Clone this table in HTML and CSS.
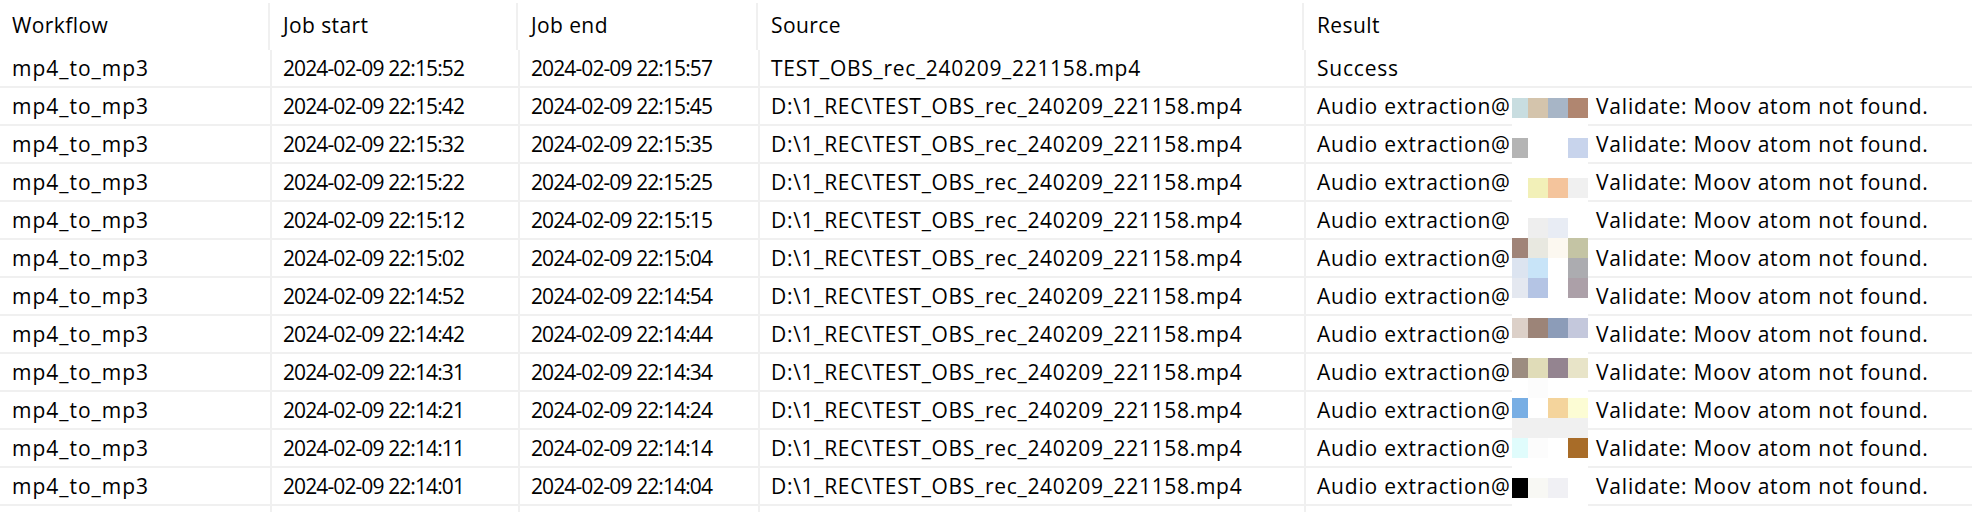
FILE: index.html
```html
<!DOCTYPE html>
<html>
<head>
<meta charset="utf-8">
<link rel="stylesheet" href="styles.css">
</head>
<body>
<div class="table">
  <div class="head">
    <div class="hcell">Workflow</div>
    <div class="hcell">Job start</div>
    <div class="hcell">Job end</div>
    <div class="hcell">Source</div>
    <div class="hcell last">Result</div>
  </div>
  <div class="row"><div class="cell wf">mp4_to_mp3</div><div class="cell date">2024-02-09 22:15:52</div><div class="cell date">2024-02-09 22:15:57</div><div class="cell src">TEST_OBS_rec_240209_221158.mp4</div><div class="cell">Success</div></div>
  <div class="row"><div class="cell wf">mp4_to_mp3</div><div class="cell date">2024-02-09 22:15:42</div><div class="cell date">2024-02-09 22:15:45</div><div class="cell src">D:\1_REC\TEST_OBS_rec_240209_221158.mp4</div><div class="cell"><span class="prefix">Audio extraction@</span>Validate: Moov atom not found.</div></div>
  <div class="row"><div class="cell wf">mp4_to_mp3</div><div class="cell date">2024-02-09 22:15:32</div><div class="cell date">2024-02-09 22:15:35</div><div class="cell src">D:\1_REC\TEST_OBS_rec_240209_221158.mp4</div><div class="cell"><span class="prefix">Audio extraction@</span>Validate: Moov atom not found.</div></div>
  <div class="row"><div class="cell wf">mp4_to_mp3</div><div class="cell date">2024-02-09 22:15:22</div><div class="cell date">2024-02-09 22:15:25</div><div class="cell src">D:\1_REC\TEST_OBS_rec_240209_221158.mp4</div><div class="cell"><span class="prefix">Audio extraction@</span>Validate: Moov atom not found.</div></div>
  <div class="row"><div class="cell wf">mp4_to_mp3</div><div class="cell date">2024-02-09 22:15:12</div><div class="cell date">2024-02-09 22:15:15</div><div class="cell src">D:\1_REC\TEST_OBS_rec_240209_221158.mp4</div><div class="cell"><span class="prefix">Audio extraction@</span>Validate: Moov atom not found.</div></div>
  <div class="row"><div class="cell wf">mp4_to_mp3</div><div class="cell date">2024-02-09 22:15:02</div><div class="cell date">2024-02-09 22:15:04</div><div class="cell src">D:\1_REC\TEST_OBS_rec_240209_221158.mp4</div><div class="cell"><span class="prefix">Audio extraction@</span>Validate: Moov atom not found.</div></div>
  <div class="row"><div class="cell wf">mp4_to_mp3</div><div class="cell date">2024-02-09 22:14:52</div><div class="cell date">2024-02-09 22:14:54</div><div class="cell src">D:\1_REC\TEST_OBS_rec_240209_221158.mp4</div><div class="cell"><span class="prefix">Audio extraction@</span>Validate: Moov atom not found.</div></div>
  <div class="row"><div class="cell wf">mp4_to_mp3</div><div class="cell date">2024-02-09 22:14:42</div><div class="cell date">2024-02-09 22:14:44</div><div class="cell src">D:\1_REC\TEST_OBS_rec_240209_221158.mp4</div><div class="cell"><span class="prefix">Audio extraction@</span>Validate: Moov atom not found.</div></div>
  <div class="row"><div class="cell wf">mp4_to_mp3</div><div class="cell date">2024-02-09 22:14:31</div><div class="cell date">2024-02-09 22:14:34</div><div class="cell src">D:\1_REC\TEST_OBS_rec_240209_221158.mp4</div><div class="cell"><span class="prefix">Audio extraction@</span>Validate: Moov atom not found.</div></div>
  <div class="row"><div class="cell wf">mp4_to_mp3</div><div class="cell date">2024-02-09 22:14:21</div><div class="cell date">2024-02-09 22:14:24</div><div class="cell src">D:\1_REC\TEST_OBS_rec_240209_221158.mp4</div><div class="cell"><span class="prefix">Audio extraction@</span>Validate: Moov atom not found.</div></div>
  <div class="row"><div class="cell wf">mp4_to_mp3</div><div class="cell date">2024-02-09 22:14:11</div><div class="cell date">2024-02-09 22:14:14</div><div class="cell src">D:\1_REC\TEST_OBS_rec_240209_221158.mp4</div><div class="cell"><span class="prefix">Audio extraction@</span>Validate: Moov atom not found.</div></div>
  <div class="row"><div class="cell wf">mp4_to_mp3</div><div class="cell date">2024-02-09 22:14:01</div><div class="cell date">2024-02-09 22:14:04</div><div class="cell src">D:\1_REC\TEST_OBS_rec_240209_221158.mp4</div><div class="cell"><span class="prefix">Audio extraction@</span>Validate: Moov atom not found.</div></div>
  <div class="row stub"><div class="cell"></div><div class="cell"></div><div class="cell"></div><div class="cell"></div><div class="cell"></div></div>

  <div class="mosaic">
    <i style="background:#c8dde0"></i><i style="background:#d4c4ac"></i><i style="background:#a7b5c6"></i><i style="background:#b08670"></i>
    <i></i><i></i><i></i><i></i>
    <i style="background:#b4b4b4"></i><i></i><i></i><i style="background:#c8d4ec"></i>
    <i></i><i></i><i></i><i></i>
    <i></i><i style="background:#f2f0b8"></i><i style="background:#f4c49c"></i><i style="background:#f0f0f0"></i>
    <i></i><i></i><i></i><i></i>
    <i></i><i style="background:#eeeeee"></i><i style="background:#e8ecf4"></i><i></i>
    <i style="background:#a08478"></i><i style="background:#e8e8e0"></i><i style="background:#fcf8f0"></i><i style="background:#c4c4a4"></i>
    <i style="background:#dce4f0"></i><i style="background:#c8e4f8"></i><i></i><i style="background:#acacb0"></i>
    <i style="background:#e4e8f0"></i><i style="background:#b4c4e4"></i><i></i><i style="background:#aca0a8"></i>
    <i></i><i></i><i></i><i></i>
    <i style="background:#dcd0c8"></i><i style="background:#9c8478"></i><i style="background:#8c9cb8"></i><i style="background:#c4c8dc"></i>
    <i></i><i></i><i></i><i></i>
    <i style="background:#9c8c80"></i><i style="background:#e0dcb8"></i><i style="background:#948490"></i><i style="background:#e8e4c8"></i>
    <i></i><i style="background:#fcfcfc"></i><i></i><i></i>
    <i style="background:#78aee4"></i><i></i><i style="background:#f4d49c"></i><i style="background:#fcfcd4"></i>
    <i style="background:#f0f0f0"></i><i style="background:#f0f0f0"></i><i style="background:#f0f0f0"></i><i style="background:#f0f0f0"></i>
    <i style="background:#e0fcfc"></i><i style="background:#fcfcfc"></i><i></i><i style="background:#a86c28"></i>
    <i></i><i></i><i></i><i></i>
    <i style="background:#000000"></i><i style="background:#f8f8f4"></i><i style="background:#f0f0f4"></i><i></i>
    <i></i><i></i><i></i><i></i>
  </div>
</div>
</body>
</html>
```
FILE: styles.css
```css
html, body {
  margin: 0;
  padding: 0;
  background: #ffffff;
  overflow: hidden;
}
body {
  width: 1972px;
  height: 512px;
  font-family: "Open Sans", "Noto Sans", sans-serif;
  font-size: 21px;
  letter-spacing: 0.8px;
  color: #000000;
}
.table {
  position: relative;
  --cols: 270px 248px 240px 546px 1fr;
}
.head {
  display: grid;
  grid-template-columns: var(--cols);
  height: 50px;
}
.hcell {
  padding-left: 13px;
  border-right: 2px solid #f0f0f0;
  margin-top: 3px;
  line-height: 44px;
  letter-spacing: 0.4px;
  white-space: nowrap;
}
.hcell:first-child {
  padding-left: 12px;
}
.hcell.last {
  border-right: none;
}
.row {
  display: grid;
  grid-template-columns: var(--cols);
  height: 36px;
  border-bottom: 2px solid #f0f0f0;
}
.cell {
  padding-left: 11px;
  line-height: 36px;
  border-left: 2px solid #f0f0f0;
  white-space: nowrap;
  overflow: hidden;
}
.cell:first-child {
  padding-left: 12px;
  border-left: none;
}
.cell.wf {
  letter-spacing: 1px;
}
.cell.date {
  letter-spacing: -0.9px;
}
.cell.src {
  letter-spacing: 0.7px;
}
.row.stub {
  height: 20px;
  border-bottom: none;
}
.prefix {
  display: inline-block;
  width: 279px;
}
.mosaic {
  position: absolute;
  left: 1512px;
  top: 98px;
  display: grid;
  grid-template-columns: 16px 20px 20px 20px;
  grid-auto-rows: 20px;
}
.mosaic i {
  display: block;
  background: #ffffff;
}
```
